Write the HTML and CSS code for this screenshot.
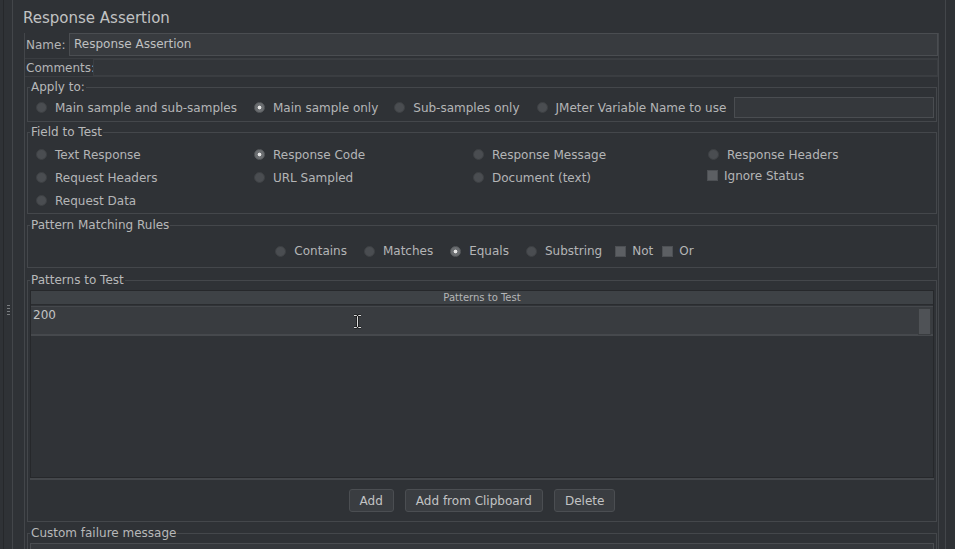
FILE: index.html
```html
<!DOCTYPE html>
<html>
<head>
<meta charset="utf-8">
<link rel="stylesheet" href="styles.css">
</head>
<body>
<div class="app">
  <div class="split"><div class="grip"><span></span><span></span><span></span><span></span></div></div>
  <div class="main">
    <h1 class="title">Response Assertion</h1>
    <div class="panel">
      <div class="name-row"><span class="lbl">Name:</span><div class="tf">Response Assertion</div></div>
      <div class="comments-row"><span class="lbl">Comments:</span><div class="tf dim"></div></div>

      <fieldset class="group apply">
        <legend>Apply to:</legend>
        <div class="row">
          <span class="opt"><i class="radio"></i>Main sample and sub-samples</span>
          <span class="opt"><i class="radio on"></i>Main sample only</span>
          <span class="opt"><i class="radio"></i>Sub-samples only</span>
          <span class="opt last"><i class="radio"></i>JMeter Variable Name to use</span>
          <div class="tf var"></div>
        </div>
      </fieldset>

      <fieldset class="group field">
        <legend>Field to Test</legend>
        <div class="grid">
          <span class="opt"><i class="radio"></i>Text Response</span>
          <span class="opt"><i class="radio on"></i>Response Code</span>
          <span class="opt"><i class="radio"></i>Response Message</span>
          <span class="opt"><i class="radio"></i>Response Headers</span>
          <span class="opt"><i class="radio"></i>Request Headers</span>
          <span class="opt"><i class="radio"></i>URL Sampled</span>
          <span class="opt"><i class="radio"></i>Document (text)</span>
          <span class="opt chk"><i class="box"></i>Ignore Status</span>
          <span class="opt"><i class="radio"></i>Request Data</span>
        </div>
      </fieldset>

      <fieldset class="group rules">
        <legend>Pattern Matching Rules</legend>
        <div class="row center">
          <span class="opt"><i class="radio"></i>Contains</span>
          <span class="opt"><i class="radio"></i>Matches</span>
          <span class="opt"><i class="radio on"></i>Equals</span>
          <span class="opt sub"><i class="radio"></i>Substring</span>
          <span class="opt chk not"><i class="box"></i>Not</span>
          <span class="opt chk"><i class="box"></i>Or</span>
        </div>
      </fieldset>

      <fieldset class="group patterns">
        <legend>Patterns to Test</legend>
        <div class="scroll">
          <div class="thead">Patterns to Test</div>
          <div class="trow"><span class="cell">200</span><span class="thumb"></span>
            <svg class="cursor" width="9" height="15" viewBox="0 0 9 15"><path d="M1 1.5h2.5l1 1 1-1H8M4.5 2.5v10M1 13.5h2.5l1-1 1 1H8" fill="none" stroke="#111" stroke-width="2.2"/><path d="M1 1.5h2.5l1 1 1-1H8M4.5 2.5v10M1 13.5h2.5l1-1 1 1H8" fill="none" stroke="#ddd" stroke-width="1"/></svg>
          </div>
        </div>
        <div class="buttons">
          <button class="btn">Add</button>
          <button class="btn">Add from Clipboard</button>
          <button class="btn">Delete</button>
        </div>
      </fieldset>

      <fieldset class="group custom">
        <legend>Custom failure message</legend>
        <div class="tf big"></div>
      </fieldset>
    </div>
  </div>
  <div class="rstrip"></div>
</div>
</body>
</html>
```

FILE: styles.css
```css
html, body {
  margin: 0;
  padding: 0;
  background: #2f3236;
}
body {
  font-family: "DejaVu Sans", "Liberation Sans", sans-serif;
  font-size: 12px;
  color: #b4b5b6;
}
.app {
  display: flex;
  width: 955px;
  height: 549px;
  overflow: hidden;
}
.split {
  width: 8px;
  margin-left: 3px;
  border-left: 1px solid #26282b;
  border-right: 1px solid #43464a;
  padding-top: 305px;
  box-sizing: content-box;
}
.grip {
  display: flex;
  flex-direction: column;
  align-items: center;
  gap: 2px;
}
.grip span {
  width: 3px;
  height: 1px;
  background: #7a7d80;
}
.main {
  flex: 1;
  padding: 0 6px 0 10px;
  display: flex;
  flex-direction: column;
}
.title {
  margin: 0;
  padding-top: 7px;
  font-size: 15px;
  line-height: 22px;
  font-weight: normal;
  color: #c1c2c3;
}
.panel {
  margin: 4px 0 0 1px;
  border-left: 1px solid #43464a;
  border-right: 1px solid #43464a;
  flex: 1;
}
.lbl { flex: none; }
.name-row {
  display: flex;
  align-items: center;
  height: 23px;
  padding-left: 1px;
}
.name-row .lbl { width: 43px; }
.tf {
  box-sizing: border-box;
  background: #383b3f;
  border: 1px solid #4a4d51;
  color: #bfc0c1;
}
.name-row .tf {
  flex: 1;
  height: 23px;
  line-height: 21px;
  padding-left: 4px;
}
.comments-row {
  display: flex;
  align-items: center;
  height: 19px;
  margin-top: 2px;
  padding-left: 1px;
  border-top: 1px solid #3a3d41;
  border-bottom: 1px solid #3a3d41;
  box-sizing: border-box;
}
.comments-row .lbl { width: 67px; }
.tf.dim {
  flex: 1;
  height: 17px;
  background: #323539;
  border-color: #3b3e42;
}
.group {
  margin: 3px 1px 0 2px;
  border: 1px solid #44474b;
  padding: 0 2px;
  min-width: 0;
}
.group legend {
  padding: 0 1px;
  line-height: 14px;
  color: #b7b8b9;
}
.apply { margin-top: 3px; }
.row {
  display: flex;
  align-items: center;
  height: 21px;
  padding-left: 6px;
}
.apply .row { padding: 3px 0 3px 6px; }
.opt {
  display: flex;
  align-items: center;
  gap: 8px;
  margin-right: 17px;
  white-space: nowrap;
}
.apply .opt:nth-child(2) { margin-right: 16px; }
.opt.last { margin-right: 8px; }
.radio {
  display: inline-block;
  width: 11px;
  height: 11px;
  border-radius: 50%;
  box-sizing: border-box;
  background: #4a4d51;
  border: 1px solid #3e4144;
  flex: none;
}
.radio.on {
  background: radial-gradient(circle, #e6e6e6 0 1.6px, #6b6e71 2.2px);
  border-color: #56595c;
}
.box {
  display: inline-block;
  width: 11px;
  height: 11px;
  box-sizing: border-box;
  background: #5c5f63;
  border: 1px solid #4d5054;
  flex: none;
}
.chk { gap: 6px; }
.tf.var {
  flex: 1;
  height: 21px;
  background: #35383c;
}
.grid {
  display: grid;
  grid-template-columns: 218px 219px 235px 1fr;
  grid-auto-rows: 23px;
  padding: 4px 0 1px 6px;
}
.grid .opt { margin-right: 0; }
.grid .chk { margin-top: -4px; margin-left: -1px; }
.rules { margin-top: 4px; }
.rules .row {
  justify-content: center;
  height: 22px;
  padding: 8px 0 5px 5px;
}
.rules .sub { margin-right: 13px; }
.rules .not { margin-right: 9px; }
.rules .opt:last-child { margin-right: 0; }
.patterns { margin-top: 5px; }
.scroll {
  margin-top: 3px;
  height: 186px;
  border: 1px solid #26282b;
  box-shadow: 0 2px 0 #44474b;
  background: #303337;
}
.thead {
  height: 13px;
  line-height: 13px;
  font-size: 10px;
  text-align: center;
  background: #3e4246;
  border-bottom: 1px solid #2a2c2f;
  color: #b5b6b7;
}
.trow {
  position: relative;
  margin-top: 1px;
  height: 30px;
  box-sizing: border-box;
  background: #393c40;
  border-top: 1px solid #45484c;
  border-bottom: 2px solid #46494d;
  display: flex;
  justify-content: space-between;
  align-items: flex-start;
  padding: 0 2px;
}
.cell {
  line-height: 14px;
  padding-top: 1px;
  color: #c2c3c4;
}
.thumb {
  width: 11px;
  height: 25px;
  margin-top: 1px;
  background: #4f5256;
  border: 1px solid #3a3d40;
}
.cursor {
  position: absolute;
  left: 322px;
  top: 7px;
}
.buttons {
  display: flex;
  justify-content: center;
  gap: 11px;
  padding: 8px 0 9px;
  margin-top: 3px;
}
.btn {
  height: 23px;
  padding: 0 10px;
  font-family: "DejaVu Sans", "Liberation Sans", sans-serif;
  font-size: 12px;
  color: #c2c3c4;
  background: #3a3d41;
  border: 1px solid #4b4e52;
  border-radius: 3px;
}
.custom { margin-top: 4px; }
.tf.big {
  margin-top: 3px;
  height: 30px;
  background: #35383c;
}
.rstrip {
  width: 9px;
  border-left: 1px solid #43464a;
  background: #2e3135;
}
```
